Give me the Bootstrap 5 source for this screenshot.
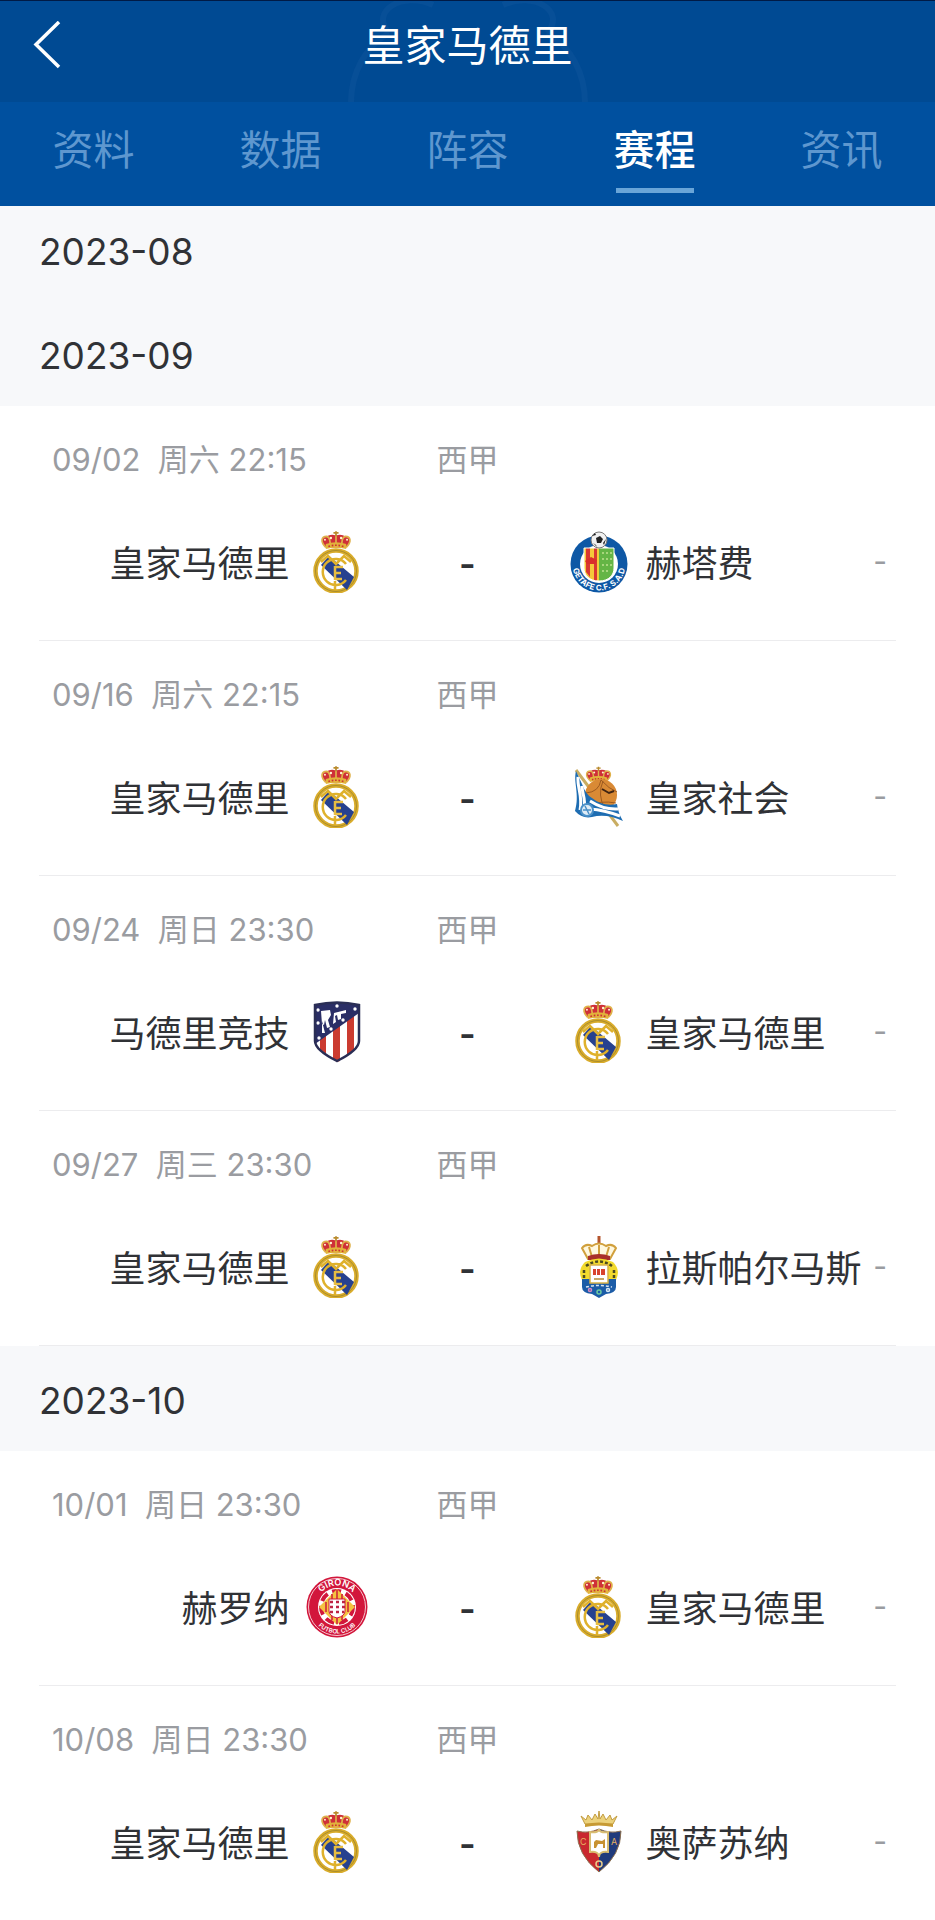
<!DOCTYPE html>
<html lang="zh-CN">
<head>
<meta charset="utf-8">
<meta name="viewport" content="width=device-width, initial-scale=1">
<title>皇家马德里 - 赛程</title>
<link href="https://cdn.jsdelivr.net/npm/bootstrap@5.3.0/dist/css/bootstrap.min.css" rel="stylesheet">
<style>
  body { font-family: Inter, "Noto Sans CJK SC", sans-serif; color: #303236; background: #fff; }
  .team-header { background: #00509f; }
  .title-bar { height: 102px; background: #004a93; border-top: 1px solid #001a45; overflow: hidden; padding-bottom: 12px; }
  .title-bar h1 { font-size: 42px; line-height: 48px; font-weight: 400; }
  .back-btn { left: 22px; top: 12px; line-height: 1; }
  .watermark { left: 50%; top: 0; transform: translateX(-50%); }
  .team-tabs .nav-link { height: 104px; padding: 23px 0 0; font-size: 41px; line-height: 50px; color: #5e97cf; }
  .team-tabs .nav-link.active { color: #fff; font-weight: 500; }
  .team-tabs .nav-link.active::after { content: ""; display: block; width: 78px; height: 5px; margin: 13px auto 0; background: #69a5d8; }
  .month { background: #f7f8fa; font-size: 37px; line-height: 43px; font-weight: 400; padding: 33px 39px 29px; }
  .month-first { padding-top: 24px; padding-bottom: 28px; }
  .match { margin: 0 39px; padding: 34px 9px 43px; border-bottom: 1px solid #ececee; }
  .match-last { border-bottom: 0; }
  .match-grid { display: grid; grid-template-columns: minmax(0, 1fr) 200px minmax(0, 1fr); }
  .meta { font-size: 31px; line-height: 40px; color: #9a9ca1; white-space: pre; }
  .meta time { padding-left: 4px; }
  .teams { margin-top: 51px; font-size: 36px; line-height: 66px; white-space: nowrap; }
  .teams svg { width: 62px; height: 62px; flex: none; }
  .score { font-weight: 600; }
  .more { font-size: 30px; line-height: 60px; color: #9a9ca1; }
</style>
</head>
<body>

<svg width="0" height="0" class="position-absolute" aria-hidden="true">
  <defs>
    <symbol id="crown" viewBox="0 0 40 23">
      <path d="M8 19C1 12 3 6 9 6q5-3 11-1 6-2 11 1c6 0 8 6 1 13z" fill="#cf3038"/>
      <path d="M8 19C1 12 3 6 9 6q5 1 4 13M32 19C39 12 37 6 31 6q-5 1-4 13M20 5v14" fill="none" stroke="#dfb14a" stroke-width="2"/>
      <path d="M20 0v6M17 2h6" stroke="#b98a2c" stroke-width="2"/>
      <path d="M8 15q12-4 24 0v6q-12-3-24 0z" fill="#e2b33b"/>
      <path d="M11 18q9-3 18 0" fill="none" stroke="#c33" stroke-width="2" stroke-dasharray="2 2"/>
      <g fill="#fff3cf"><circle cx="14" cy="8" r="1.4"/><circle cx="26" cy="8" r="1.4"/><circle cx="7" cy="10" r="1.2"/><circle cx="33" cy="10" r="1.2"/></g>
    </symbol>
    <symbol id="real" viewBox="0 0 62 62">
      <use href="#crown" x="13" y="0" width="34" height="20"/>
      <circle cx="30" cy="40" r="20.5" fill="#fff" stroke="#d9ac2b" stroke-width="4.5"/>
      <circle cx="30" cy="40" r="20.5" fill="none" stroke="#a98d2e" stroke-width="1"/>
      <path d="M15 34l8-9 25 21-7 13z" fill="#26418f"/>
      <path d="M40 33a13 13 0 1 0 0 16M15 31l7-6 8 8 8-8 7 6M29 50v9" fill="none" stroke="#dfb12c" stroke-width="2.5"/>
      <path d="M29 35v14M29 36h8M29 42h6M29 48h7" fill="none" stroke="#e6bd42" stroke-width="2.5"/>
    </symbol>
    <symbol id="getafe" viewBox="0 0 62 62">
      <circle cx="31" cy="33" r="28.5" fill="#0e58a5"/>
      <circle cx="31" cy="33" r="19" fill="#fff"/>
      <path d="M16 17h15v33c-10 0-15-6-15-13z" fill="#f4c93a"/>
      <path d="M31 17h15v20c0 7-5 13-15 13z" fill="#64b545"/>
      <path d="M18 17h4v29l-4-5zM26 17h3v33l-3-1z" fill="#d93832"/>
      <path d="M17 30l6-4 6 3-2 4h-8z" fill="#d92f2b"/>
      <path d="M34 22h10M34 28h10M34 34h10M34 40h8" stroke="#a7d67c" stroke-width="2" stroke-dasharray="2 2"/>
      <path d="M16 17h30v20c0 7-5 13-15 13s-15-6-15-13z" fill="none" stroke="#fff"/>
      <circle cx="31" cy="9" r="8" fill="#f1f1f1" stroke="#777"/>
      <path d="M28 7l4-2 3 3-2 4h-4zM24 5l3-3 1 2zM38 8l-3 4 1 2zM25 12l3 2 1 2z" fill="#222"/>
      <path id="getafe-arc" d="M4.500 33a26.500 26.500 0 0 0 53 0" fill="none"/>
      <text font-family="Inter" font-size="8" font-weight="700" fill="#fff" text-anchor="middle"><textPath href="#getafe-arc" startOffset="50%">GETAFE C.F. S.A.D</textPath></text>
    </symbol>
    <symbol id="sociedad" viewBox="0 0 62 62">
      <use href="#crown" x="16" y="0" width="29" height="18"/>
      <path d="M8 4l42 56" stroke="#c9ad62" stroke-width="3"/>
      <circle cx="33" cy="29" r="16" fill="#d98a35"/>
      <path d="M18 27q13-1 15-13M33 14q8 9 16 12M21 40q11-6 27-3M35 15q-6 14 2 28" fill="none" stroke="#9d5a20" stroke-width="1"/>
      <path d="M34 23l7 4 5-2" fill="none" stroke="#402413" stroke-width="2"/>
      <path d="M8 5C5 16 12 28 7 45q7 8 17 6 14-4 31 4Q50 47 49 38q-14 3-25-6-6-3-10-14z" fill="#1e6db2"/>
      <path d="M10 11c-1 11 5 19 2 33M14 20c0 8 4 12 2 22M22 35q14 9 28 8M22 43q14 1 30 7" fill="none" stroke="#fff" stroke-width="3"/>
      <circle cx="19" cy="44" r="6" fill="#dfecf6" stroke="#4a90c8" stroke-width="2"/>
      <path d="M15 44h8M17 40l4 8" stroke="#4a90c8" stroke-width="1.5"/>
    </symbol>
    <symbol id="atletico" viewBox="0 0 62 62">
      <path d="M9 4q22-5 44 0v36q0 9-22 20Q9 49 9 40z" fill="#fff"/>
      <path d="M14 37l6-4v20l-6-5zM27 28l7-4v36l-3 1-4-3zM41 18l7-5v35l-7 6z" fill="#cb3b30"/>
      <path d="M9 4q22-5 44 0v8L9 43z" fill="#2a2e66"/>
      <path d="M15 10l9-1 1 5-3 5 2 7-3 1-2-8-1 5-2-1zM28 12l12-3v3l-5 1v5l-3 1-1-5-2 1 1 6-3 2zM16 20v12h3" fill="#fff"/>
      <g fill="#fff"><circle cx="31" cy="5" r="1.7"/><circle cx="49" cy="8" r="1.7"/><circle cx="12" cy="9" r="1.7"/><circle cx="12" cy="22" r="1.7"/><circle cx="37" cy="19" r="1.7"/><circle cx="25" cy="28" r="1.7"/><circle cx="13" cy="37" r="1.7"/></g>
      <path d="M9 4q22-5 44 0v36q0 9-22 20Q9 49 9 40z" fill="none" stroke="#2a2e55" stroke-width="2.5"/>
    </symbol>
    <symbol id="palmas" viewBox="0 0 62 62">
      <path d="M31 0v10" stroke="#b4552d" stroke-width="3"/>
      <path d="M20 23L14 12q4-5 10-2 7-5 14 0 6-3 10 2l-6 11z" fill="#fff8df" stroke="#d1a03d" stroke-width="2"/>
      <path d="M24 21l-3-10M38 21l3-10M31 9v12" stroke="#d1a03d" stroke-width="2"/>
      <path d="M20 20q11-4 22 0v4H20z" fill="#a92f2a"/>
      <path d="M14 44q-5-10 3-18 14-7 28 0 8 8 3 18z" fill="#f2da2d"/>
      <path d="M18 30q13-9 26 0M16 34v8M46 34v8" fill="none" stroke="#4b4a20" stroke-width="2.5" stroke-dasharray="3 2"/>
      <path d="M14 43h34v8q0 6-10 7l-7 4-7-4q-10-1-10-7z" fill="#1c5ca7"/>
      <path d="M22 29h18v18H22z" fill="#fff" stroke="#d7b14a" stroke-width="1.5"/>
      <path d="M25 33h3v6h-3zM29 33h3v6h-3zM33 33h4v6h-4z" fill="#d8442e"/><path d="M26 43h10" stroke="#c7a867" stroke-width="2"/>
      <path d="M18 51q13-3 26 0" stroke="#d8e4f0" fill="none" stroke-dasharray="3 2" stroke-width="1.5"/>
      <g fill="none" stroke-width="1.5"><circle cx="22" cy="54" r="1.500" stroke="#d98ac0"/><circle cx="31" cy="56" r="2" stroke="#6ccaa0"/><circle cx="40" cy="54" r="1.500" stroke="#d7e9f5"/></g>
    </symbol>
    <symbol id="girona" viewBox="0 0 62 62">
      <circle cx="31" cy="31" r="30.5" fill="#d2163b"/>
      <circle cx="31" cy="31" r="28.5" fill="none" stroke="#f5c6ce" stroke-width="1"/>
      <circle cx="31" cy="31" r="19" fill="#fff"/>
      <circle cx="31" cy="31" r="16" fill="none" stroke="#d2163b" stroke-width="4" stroke-dasharray="9 5"/>
      <path d="M31 13l18 18-18 18-18-18z" fill="#f4c341"/>
      <path d="M26 18v26M31 14v34M36 18v26M20 26v10M42 26v10" stroke="#d7463a" stroke-width="2"/>
      <path d="M23 23h16v12q0 5-8 7-8-2-8-7z" fill="#fff" stroke="#d2163b"/>
      <path d="M24 26h15M24 31h15M24 36h14" stroke="#bd2344" stroke-width="2.5" stroke-dasharray="3 3"/>
      <path id="girona-top" d="M9.500 31a21.500 21.500 0 0 1 43 0" fill="none"/>
      <path id="girona-low" d="M4.500 31a26.500 26.500 0 0 0 53 0" fill="none"/>
      <g font-family="Inter" fill="#fff" text-anchor="middle" font-weight="600">
        <text font-size="9"><textPath href="#girona-top" startOffset="50%">GIRONA</textPath></text>
        <text font-size="6"><textPath href="#girona-low" startOffset="50%">FUTBOL CLUB</textPath></text>
      </g>
    </symbol>
    <symbol id="osasuna" viewBox="0 0 62 62">
      <path d="M17 13l-4-8 5 4 2-5 4 5 3-6 3 5 1-8 1 8 3-5 3 6 4-5 2 5 5-4-4 8z" fill="#ecd27c" stroke="#c29c40"/>
      <path d="M17 13q14-3 28 0v3q-14-3-28 0z" fill="#c79a33"/>
      <path d="M9 20q11 3 22-2v43Q9 44 9 20z" fill="#c9282f"/>
      <path d="M53 20q-11 3-22-2v43q22-17 22-41z" fill="#203b7c"/>
      <path d="M9 20q11 3 22-2 11 5 22 2 0 24-22 41Q9 44 9 20z" fill="none" stroke="#8c7050"/>
      <path d="M22 21q9 1 9-3 0 4 9 3v20q-9-1-9 5 0-6-9-5z" fill="#fff" stroke="#d8bd72" stroke-width="2"/>
      <path d="M26 37v-6l2-2 6 1 3-2v9h-2v-4h-5l-2 4z" fill="#c89231"/>
      <circle cx="31" cy="53" r="3" fill="none" stroke="#e8cd8c" stroke-width="1.500"/>
      <g font-family="Inter" font-size="9" fill="#e6b261"><text x="12" y="34">C</text><text x="43" y="34">A</text></g>
    </symbol>
  </defs>
</svg>

<header class="team-header">
  <div class="title-bar position-relative d-flex align-items-center justify-content-center">
    <svg class="watermark position-absolute" width="250" height="102" viewBox="0 0 250 102" fill="none" stroke="#074f97" stroke-width="6" aria-hidden="true"><path d="M8 102c0-30 14-56 38-70M242 102c0-30-14-56-38-70M46 32C26 10 60-10 90 4M204 32c20-22-14-42-44-28"/></svg>
    <button type="button" class="back-btn btn border-0 p-2 position-absolute" aria-label="返回">
      <svg width="32" height="50" viewBox="0 0 32 50" fill="none" stroke="#fff" stroke-width="3.500" aria-hidden="true"><path d="M29 1L6 23.500 29 46"/></svg>
    </button>
    <h1 class="position-relative text-white mb-0">皇家马德里</h1>
  </div>
  <nav class="team-tabs nav nav-justified flex-nowrap">
    <a class="nav-link" href="#info">资料</a>
    <a class="nav-link" href="#data">数据</a>
    <a class="nav-link" href="#squad">阵容</a>
    <a class="nav-link active" aria-current="page" href="#schedule">赛程</a>
    <a class="nav-link" href="#news">资讯</a>
  </nav>
</header>

<main id="schedule">
  <h2 class="month month-first mb-0">2023-08</h2>
  <h2 class="month mb-0">2023-09</h2>

  <article class="match">
    <div class="match-grid meta"><time>09/02  周六 22:15</time><span class="text-center">西甲</span></div>
    <div class="match-grid teams">
      <div class="d-flex justify-content-end"><span>皇家马德里</span><svg class="ms-3" aria-hidden="true"><use href="#real"/></svg></div>
      <span class="score text-center">-</span>
      <div class="d-flex"><svg class="me-3" aria-hidden="true"><use href="#getafe"/></svg><span>赫塔费</span><span class="more ms-auto">-</span></div>
    </div>
  </article>

  <article class="match">
    <div class="match-grid meta"><time>09/16  周六 22:15</time><span class="text-center">西甲</span></div>
    <div class="match-grid teams">
      <div class="d-flex justify-content-end"><span>皇家马德里</span><svg class="ms-3" aria-hidden="true"><use href="#real"/></svg></div>
      <span class="score text-center">-</span>
      <div class="d-flex"><svg class="me-3" aria-hidden="true"><use href="#sociedad"/></svg><span>皇家社会</span><span class="more ms-auto">-</span></div>
    </div>
  </article>

  <article class="match">
    <div class="match-grid meta"><time>09/24  周日 23:30</time><span class="text-center">西甲</span></div>
    <div class="match-grid teams">
      <div class="d-flex justify-content-end"><span>马德里竞技</span><svg class="ms-3" aria-hidden="true"><use href="#atletico"/></svg></div>
      <span class="score text-center">-</span>
      <div class="d-flex"><svg class="me-3" aria-hidden="true"><use href="#real"/></svg><span>皇家马德里</span><span class="more ms-auto">-</span></div>
    </div>
  </article>

  <article class="match">
    <div class="match-grid meta"><time>09/27  周三 23:30</time><span class="text-center">西甲</span></div>
    <div class="match-grid teams">
      <div class="d-flex justify-content-end"><span>皇家马德里</span><svg class="ms-3" aria-hidden="true"><use href="#real"/></svg></div>
      <span class="score text-center">-</span>
      <div class="d-flex"><svg class="me-3" aria-hidden="true"><use href="#palmas"/></svg><span>拉斯帕尔马斯</span><span class="more ms-auto">-</span></div>
    </div>
  </article>

  <h2 class="month mb-0">2023-10</h2>

  <article class="match">
    <div class="match-grid meta"><time>10/01  周日 23:30</time><span class="text-center">西甲</span></div>
    <div class="match-grid teams">
      <div class="d-flex justify-content-end"><span>赫罗纳</span><svg class="ms-3" aria-hidden="true"><use href="#girona"/></svg></div>
      <span class="score text-center">-</span>
      <div class="d-flex"><svg class="me-3" aria-hidden="true"><use href="#real"/></svg><span>皇家马德里</span><span class="more ms-auto">-</span></div>
    </div>
  </article>

  <article class="match match-last">
    <div class="match-grid meta"><time>10/08  周日 23:30</time><span class="text-center">西甲</span></div>
    <div class="match-grid teams">
      <div class="d-flex justify-content-end"><span>皇家马德里</span><svg class="ms-3" aria-hidden="true"><use href="#real"/></svg></div>
      <span class="score text-center">-</span>
      <div class="d-flex"><svg class="me-3" aria-hidden="true"><use href="#osasuna"/></svg><span>奥萨苏纳</span><span class="more ms-auto">-</span></div>
    </div>
  </article>
</main>

<script src="https://cdn.jsdelivr.net/npm/bootstrap@5.3.0/dist/js/bootstrap.bundle.min.js"></script>
</body>
</html>
